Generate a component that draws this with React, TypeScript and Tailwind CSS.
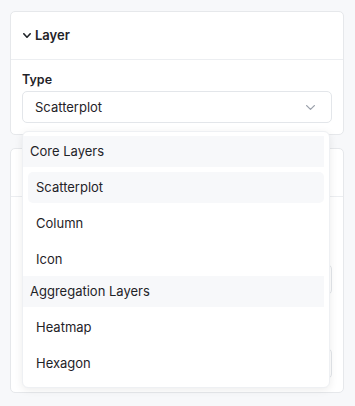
import React from "react";

function ChevronDown({ className, w = 8, h = 5, sw = 1.5 }: { className?: string; w?: number; h?: number; sw?: number }) {
  return (
    <svg width={w} height={h} viewBox={`0 0 ${w} ${h}`} className={className} fill="none">
      <polyline
        points={`${sw / 2},${sw / 2} ${w / 2},${h - sw / 2} ${w - sw / 2},${sw / 2}`}
        stroke="currentColor"
        strokeWidth={sw}
        strokeLinecap="round"
        strokeLinejoin="round"
      />
    </svg>
  );
}

export default function App() {
  return (
    <div className="min-h-[406px] w-[355px] bg-[#f7f8fa] pl-[10px] pr-[11px] pt-[11px] font-['Inter',sans-serif] text-[13px] text-[#1f2328]">
      <div className="relative">
        {/* Card 1 */}
        <div className="rounded-[5px] border border-[#e6e8eb] bg-white">
          <div className="flex h-[48px] items-center gap-[4px] border-b border-[#eceef1] pl-[12px]">
            <ChevronDown w={8} h={5} sw={1.6} className="text-[#1f2328]" />
            <span className="font-semibold text-[13px] leading-none">Layer</span>
          </div>
          <div className="px-[11px] pt-[12px] pb-[11px]">
            <div className="h-[16px] font-semibold text-[12.5px] leading-[16px]">Type</div>
            <div className="mt-[3px] flex h-[32px] items-center justify-between rounded-[5px] border border-[#e3e6ea] bg-white pl-[12px] pr-[16px]">
              <span className="leading-none">Scatterplot</span>
              <ChevronDown w={9} h={5} sw={1.3} className="text-[#9aa0aa]" />
            </div>
          </div>
        </div>

        {/* Card 2 */}
        <div className="mt-[13px] h-[245px] rounded-[5px] border border-[#e6e8eb] bg-white">
          <div className="h-[48px] border-b border-[#eceef1]" />
          <div className="px-[11px]">
            <div className="mt-[67px] h-[31px] rounded-[5px] border border-[#e3e6ea]" />
            <div className="mt-[53px] h-[31px] rounded-[5px] border border-[#e3e6ea]" />
          </div>
        </div>

        {/* Dropdown menu */}
        <div className="absolute left-[12px] top-[120px] w-[308px] rounded-[6px] border border-[#eef0f3] bg-white pb-[8px] pt-[4px] pr-[5px] shadow-[0_2px_8px_rgba(0,0,0,0.08)]">
          <div className="flex h-[31px] items-center bg-[#f7f8fa] pl-[7px]">Core Layers</div>
          <div className="ml-[5px] mt-[5px] flex h-[31px] items-center rounded-[5px] bg-[#f7f8fa] pl-[8px]">Scatterplot</div>
          <div className="ml-[5px] mt-[5px] flex h-[31px] items-center rounded-[5px] pl-[8px]">Column</div>
          <div className="ml-[5px] mt-[5px] flex h-[31px] items-center rounded-[5px] pl-[8px]">Icon</div>
          <div className="mt-px flex h-[31px] items-center bg-[#f7f8fa] pl-[7px]">Aggregation Layers</div>
          <div className="ml-[5px] mt-[5px] flex h-[31px] items-center rounded-[5px] pl-[8px]">Heatmap</div>
          <div className="ml-[5px] mt-[5px] flex h-[31px] items-center rounded-[5px] pl-[8px]">Hexagon</div>
        </div>
      </div>
    </div>
  );
}
